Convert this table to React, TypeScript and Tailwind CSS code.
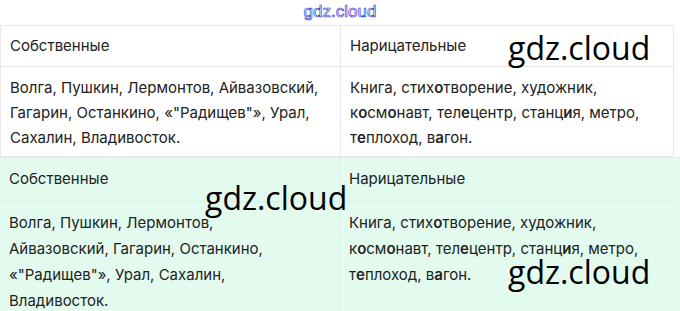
const B = ({ c }: { c: string }) => <b className="font-semibold">{c}</b>;

const commonLines = [
  <>Книга, стих<B c="о" />творение, художник,</>,
  <>к<B c="о" />см<B c="о" />навт, тел<B c="е" />центр, станц<B c="и" />я, метро,</>,
  <>т<B c="е" />плоход, в<B c="а" />гон.</>,
];

const properTop = [
  'Волга, Пушкин, Лермонтов, Айвазовский,',
  'Гагарин, Останкино, «"Радищев"», Урал,',
  'Сахалин, Владивосток.',
];

const properGreen = [
  'Волга, Пушкин, Лермонтов,',
  'Айвазовский, Гагарин, Останкино,',
  '«"Радищев"», Урал, Сахалин,',
  'Владивосток.',
];

function Mark({ className }: { className: string }) {
  return (
    <span
      className={`pointer-events-none absolute text-[32px] leading-none text-black ${className}`}
      style={{ fontFamily: '"Open Sans", sans-serif' }}
    >
      gdz.cloud
    </span>
  );
}

function Table({ green }: { green?: boolean }) {
  const cell = 'px-[9px] border-[#e5e7eb]';
  const head = green ? 'h-[44px]' : 'h-[41px]';
  const lh = green ? 'leading-[26px]' : 'leading-[25px]';
  const left = green ? properGreen : properTop;
  return (
    <div
      className={`grid grid-cols-[340px_334px] ${
        green ? 'bg-[#e3fbef] w-[680px] border-t border-[#d9f0e3]' : 'bg-white w-[674px] border border-[#e8e8e8]'
      }`}
    >
      <div className={`${cell} ${head} border-r border-b flex items-center`}>Собственные</div>
      <div className={`${cell} ${head} border-b flex items-center`}>Нарицательные</div>
      <div className={`${cell} border-r pt-[8px] ${green ? 'pb-[2px]' : 'pb-[6px]'} ${lh}`}>
        {left.map((l) => (
          <div key={l} className="whitespace-nowrap">{l}</div>
        ))}
      </div>
      <div className={`${cell} pt-[8px] ${lh}`}>
        {commonLines.map((l, i) => (
          <div key={i} className="whitespace-nowrap">{l}</div>
        ))}
      </div>
    </div>
  );
}

export default function App() {
  return (
    <div
      className="relative w-[680px] h-[311px] overflow-hidden bg-white text-[15px] text-[#222]"
      style={{ fontFamily: 'Inter, "Noto Sans", sans-serif' }}
    >
      <div className="h-[25px] flex justify-center pt-[1px]">
        <span
          className="text-[17px] leading-[22px] text-transparent"
          style={{ WebkitTextStroke: '0.7px #3b3bd0', fontFamily: '"Liberation Sans", sans-serif' }}
        >
          gdz.cloud
        </span>
      </div>
      <Table />
      <Table green />
      <Mark className="left-[508px] top-[32px]" />
      <Mark className="left-[205px] top-[182px]" />
      <Mark className="left-[508px] top-[256px]" />
    </div>
  );
}
